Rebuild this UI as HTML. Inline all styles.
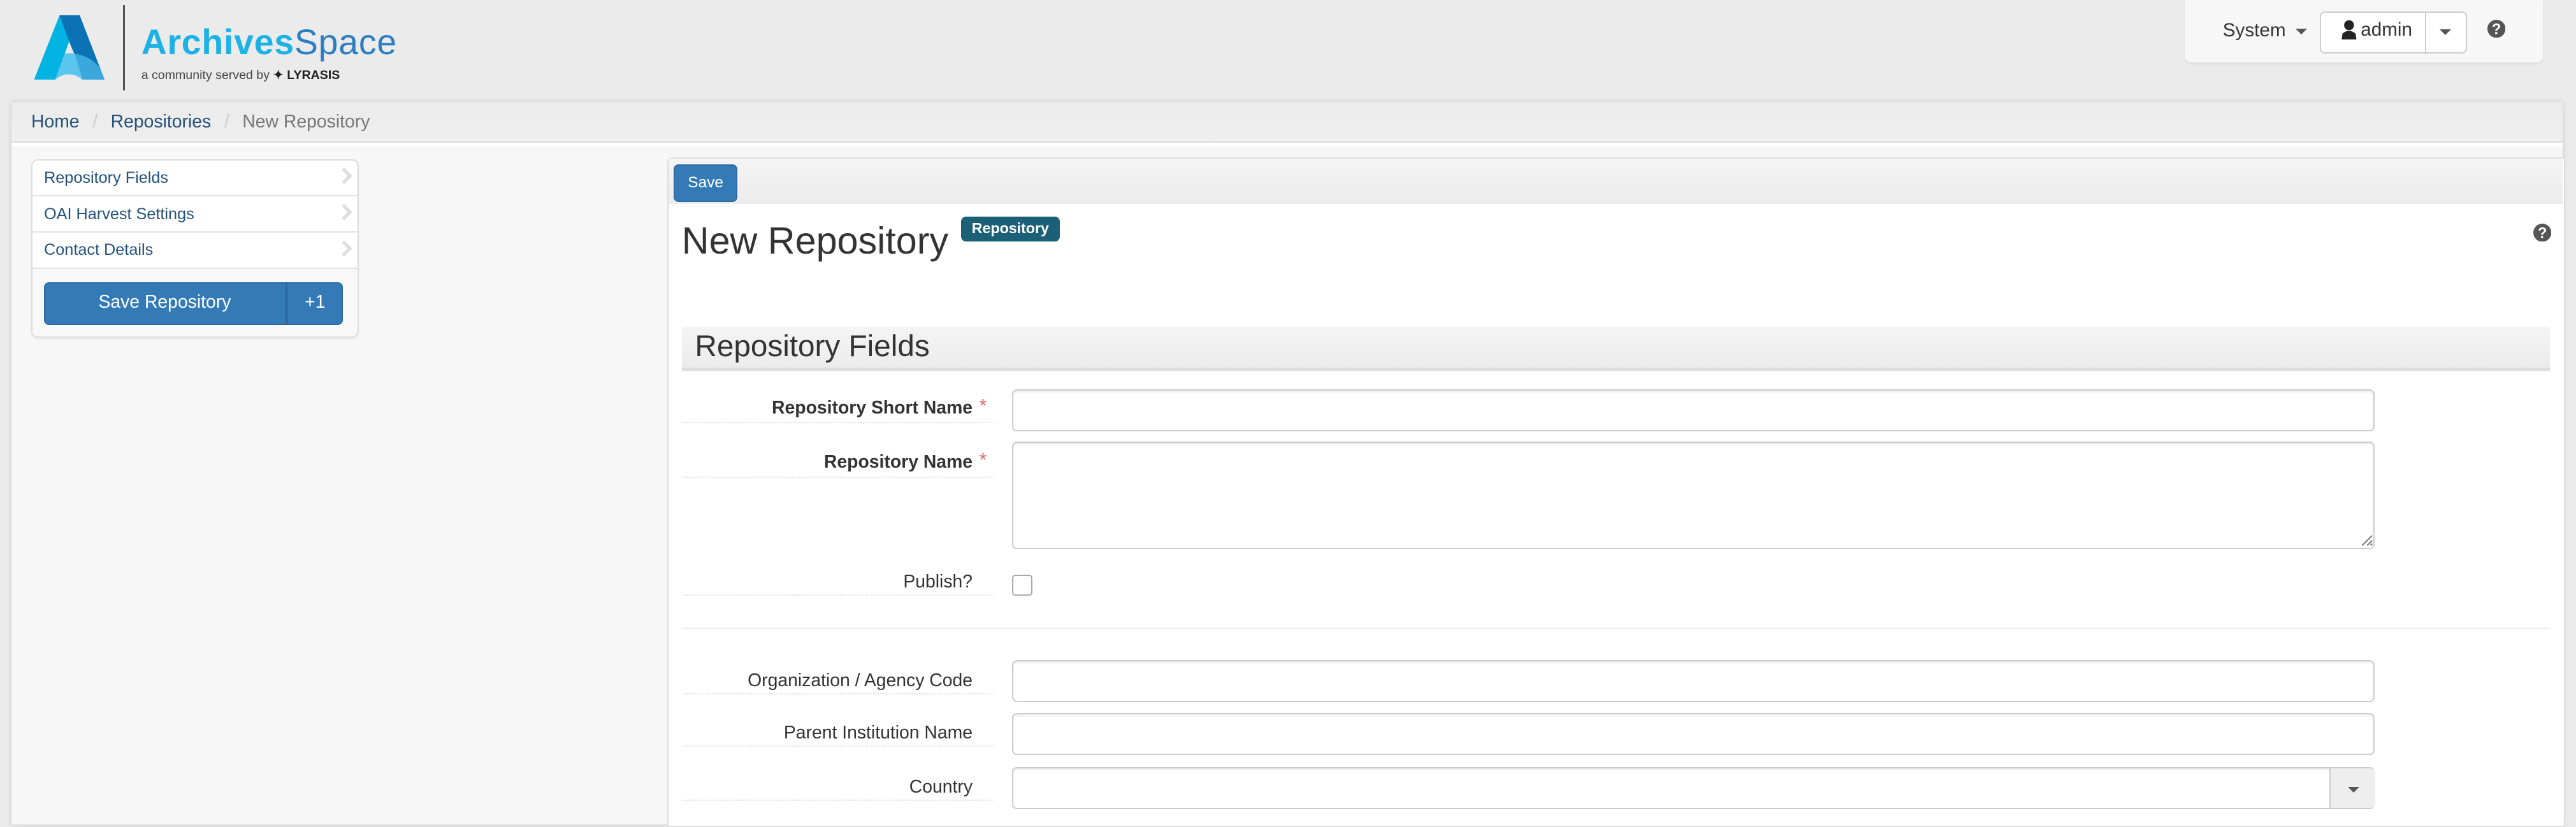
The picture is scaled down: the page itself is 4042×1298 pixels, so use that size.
<!DOCTYPE html>
<html><head><meta charset="utf-8"><style>
html,body{margin:0;padding:0}
body{width:1568px;height:500.4px;zoom:2.5778;background:#ebebeb;font-family:"Liberation Sans",Arial,sans-serif;color:#333;position:relative;overflow:hidden}
.a{position:absolute}
.lnk{color:#23527c}
.nav{left:1330px;top:0;width:218px;height:38px;background:#f7f7f7;border-radius:0 0 4px 4px;box-shadow:0 1px 2px rgba(0,0,0,.05)}
.caret{display:inline-block;width:0;height:0;border-left:3.5px solid transparent;border-right:3.5px solid transparent;border-top:3.5px solid #555;vertical-align:middle}
.lbl{position:absolute;left:415px;width:177px;text-align:right;font-size:11px;color:#333}
.dot{position:absolute;left:415px;width:190px;border-top:1px dotted #e2e2e2}
.inp{position:absolute;left:616px;width:828px;border:1px solid #ccc;border-radius:3px;background:#fff;box-shadow:inset 0 1px 1px rgba(0,0,0,.075)}
.ast{color:#e07070;font-weight:normal;font-size:12px;position:absolute;left:181px;top:-2px}
.side{left:19px;top:97px;width:198px;height:107px;background:#f8f8f8;border:1px solid #ddd;border-radius:4px;box-shadow:0 1px 1px rgba(0,0,0,.05)}
.it{position:absolute;left:0;width:198px;height:21px;background:#fff;border-bottom:1px solid #e4e4e4;font-size:9.8px;color:#23527c}
.it span{position:absolute;left:7px;top:5px}
.it i{position:absolute;right:5px;top:6px;width:5px;height:5px;border-right:2px solid #ddd;border-top:2px solid #ddd;transform:rotate(45deg)}
</style></head><body>
<svg class="a" style="left:15.5px;top:3.9px" width="66" height="50.4" viewBox="0 0 510 390">
<polygon points="40,345 160,42 205,42 205,165 185,222 140,345" fill="#00b3e3"/>
<polygon points="160,42 255,42 372,345 320,345 230,225 205,165" fill="#0a72b5"/>
<path d="M185,222 Q290,215 350,290 L372,345 L265,345 Z" fill="#3aa8dc"/>
<path d="M185,222 L232,224 L268,345 Q205,295 140,345 Z" fill="#5ac6ee"/>
</svg>
<div class="a" style="left:75px;top:3px;width:1px;height:52px;background:#555"></div>
<div class="a" style="left:86px;top:13px;font-size:21.5px;letter-spacing:0.3px;white-space:nowrap"><b style="color:#1cb2e6">Archives</b><span style="color:#2c7ec1">Space</span></div>
<div class="a" style="left:86px;top:41px;font-size:7.6px;color:#444;white-space:nowrap">a community served by <b style="color:#222">✦ LYRASIS</b></div>
<div class="a nav">
 <div class="a" style="left:23px;top:12px;font-size:11.5px;color:#333">System <span class="caret" style="margin-left:3px"></span></div>
 <div class="a" style="left:82px;top:7px;width:88px;height:24px;border:1px solid #ccc;border-radius:3px;background:#fff"></div>
 <div class="a" style="left:146px;top:7px;width:1px;height:26px;background:#ccc"></div>
 <svg class="a" style="left:95px;top:12px" width="10" height="12" viewBox="0 0 10 12"><circle cx="5" cy="3.3" r="3" fill="#222"/><path d="M0.5,12 L1,8.5 Q5,5 9,8.5 L9.5,12Z" fill="#222"/></svg>
 <div class="a" style="left:107px;top:11.5px;font-size:11.5px;color:#333">admin</div>
 <span class="a caret" style="left:155px;top:18px"></span>
 <svg class="a" style="left:184px;top:12px" width="11" height="11" viewBox="0 0 12 12"><circle cx="6" cy="6" r="6" fill="#555"/><text x="6" y="9.6" text-anchor="middle" font-size="10" font-weight="bold" fill="#fff" font-family="Liberation Sans">?</text></svg>
</div>
<div class="a" style="left:7px;top:62px;width:1553px;height:440px;background:#f7f7f7;box-shadow:0 0 3px rgba(0,0,0,.15)"></div>
<div class="a" style="left:7px;top:62px;width:1553px;height:24px;background:linear-gradient(#ebebeb,#efefef);border-bottom:1px solid #ddd;box-shadow:0 2px 0 #fff"></div>
<div class="a" style="left:19px;top:68px;font-size:11px;white-space:nowrap"><span class="lnk">Home</span><span style="color:#ccc;padding:0 8px">/</span><span class="lnk">Repositories</span><span style="color:#ccc;padding:0 8px">/</span><span style="color:#777">New Repository</span></div>
<div class="a side">
 <div class="it" style="top:0;border-radius:4px 4px 0 0"><span>Repository Fields</span><i></i></div>
 <div class="it" style="top:22px"><span>OAI Harvest Settings</span><i></i></div>
 <div class="it" style="top:44px"><span>Contact Details</span><i></i></div>
 <div class="a" style="left:7px;top:74px;width:182px;height:26px;background:#337ab7;border:1px solid #2e6da4;border-radius:3px;box-sizing:border-box"></div>
 <div class="a" style="left:154px;top:74px;width:1px;height:26px;background:#2b6599"></div>
 <div class="a" style="left:7px;top:80px;width:147px;text-align:center;font-size:11px;color:#fff">Save Repository</div>
 <div class="a" style="left:155px;top:80px;width:34px;text-align:center;font-size:11px;color:#fff">+1</div>
</div>
<div class="a" style="left:406px;top:96px;width:1154px;height:406px;background:#fff;border:1px solid #ddd;border-radius:3px 0 0 0"></div>
<div class="a" style="left:407px;top:97px;width:1153px;height:27px;background:linear-gradient(#f4f4f4,#ececec)"></div>
<div class="a" style="left:410px;top:100px;width:39px;height:23px;background:#337ab7;border:1px solid #2e6da4;border-radius:3px;box-sizing:border-box;color:#fff;font-size:9.5px;text-align:center;line-height:21px">Save</div>
<div class="a" style="left:415px;top:133px;font-size:23px;color:#333;white-space:nowrap">New Repository</div>
<div class="a" style="left:585px;top:132px;width:60px;height:15px;background:#1b6077;border-radius:3px;color:#fff;font-size:9px;font-weight:bold;text-align:center;line-height:14px">Repository</div>
<svg class="a" style="left:1542px;top:136px" width="11" height="11" viewBox="0 0 12 12"><circle cx="6" cy="6" r="6" fill="#555"/><text x="6" y="9.6" text-anchor="middle" font-size="10" font-weight="bold" fill="#fff" font-family="Liberation Sans">?</text></svg>
<div class="a" style="left:415px;top:199px;width:1137px;height:25px;background:linear-gradient(#f4f4f4,#ececec);border-bottom:2px solid #ddd"></div>
<div class="a" style="left:423px;top:200px;font-size:18.5px;color:#333;white-space:nowrap">Repository Fields</div>
<div class="lbl" style="top:242px;font-weight:bold">Repository Short Name<span class="ast">*</span></div>
<div class="dot" style="top:257px"></div>
<div class="inp" style="top:237px;height:24px"></div>
<div class="lbl" style="top:275px;font-weight:bold">Repository Name<span class="ast">*</span></div>
<div class="dot" style="top:290px"></div>
<div class="inp" style="top:269px;height:64px"></div>
<svg class="a" style="left:1437px;top:325px" width="8" height="8" viewBox="0 0 8 8"><path d="M1,7 L7,1 M4,7 L7,4 M6,7 L7,6" stroke="#777" stroke-width="0.8"/></svg>
<div class="lbl" style="top:348px">Publish?</div>
<div class="dot" style="top:362px"></div>
<div class="a" style="left:616px;top:350px;width:11px;height:11px;border:1px solid #aaa;border-radius:2px;background:#fff"></div>
<div class="a" style="left:415px;top:382px;width:1137px;height:1px;background:#eee"></div>
<div class="lbl" style="top:408px">Organization / Agency Code</div>
<div class="dot" style="top:422px"></div>
<div class="inp" style="top:402px;height:24px"></div>
<div class="lbl" style="top:440px">Parent Institution Name</div>
<div class="dot" style="top:454px"></div>
<div class="inp" style="top:434px;height:24px"></div>
<div class="lbl" style="top:473px">Country</div>
<div class="dot" style="top:487px"></div>
<div class="inp" style="top:467px;height:24px"></div>
<div class="a" style="left:1418px;top:468px;width:27px;height:24px;background:#eee;border-left:1px solid #ccc;border-radius:0 3px 3px 0"></div>
<span class="a caret" style="left:1429px;top:479px"></span>
</body></html>
